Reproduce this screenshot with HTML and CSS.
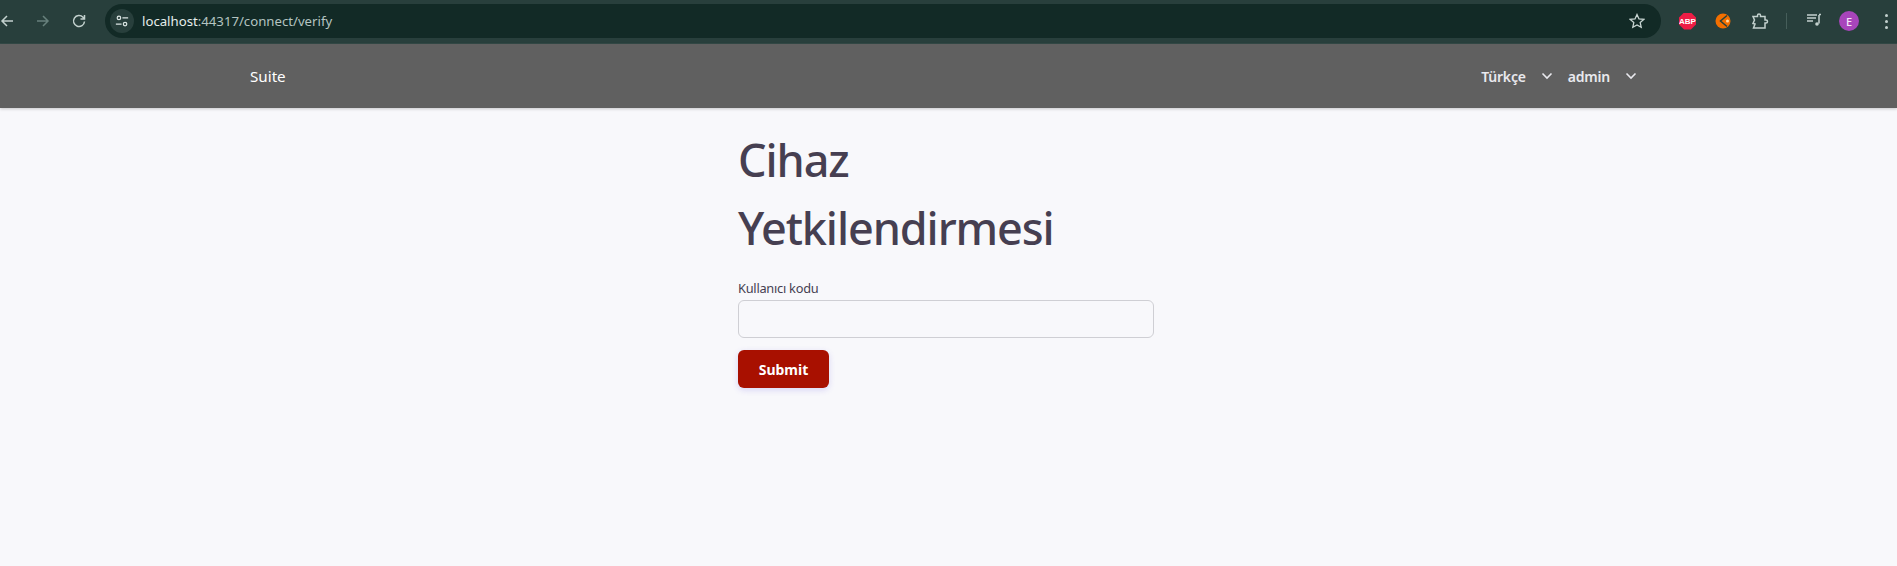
FILE: index.html
```html
<!DOCTYPE html>
<html lang="tr">
<head>
<meta charset="utf-8">
<title>Cihaz Yetkilendirmesi</title>
<link rel="stylesheet" href="styles.css">
</head>
<body>
<header class="chrome">
  <div class="nav-buttons">
    <svg class="ic back" viewBox="0 0 16 16"><path d="M14 8H3M8 3 3 8l5 5"/></svg>
    <svg class="ic fwd" viewBox="0 0 16 16"><path d="M2 8h11M8 3l5 5-5 5"/></svg>
    <svg class="ic reload" viewBox="0 0 16 16"><path d="M13.500 8.500A5.500 5.500 0 1 1 12 4.200L13.500 6M13.500 2v4h-4"/></svg>
  </div>
  <div class="omnibox">
    <span class="site-info">
      <svg class="tune" viewBox="0 0 16 16"><circle cx="4.500" cy="4.500" r="2"/><path d="M8.500 4.500H15M1 11.500h6.500"/><circle cx="11.500" cy="11.500" r="2"/></svg>
    </span>
    <span class="url">localhost<span class="url-dim">:44317/connect/verify</span></span>
    <svg class="star" viewBox="0 0 16 16"><path d="M8 1.500l2 4.400 4.800.5-3.600 3.200 1 4.700L8 11.900l-4.200 2.400 1-4.700L1.200 6.400 6 5.900z"/></svg>
  </div>
  <div class="extensions">
    <span class="abp">ABP</span>
    <svg class="ext-orange" viewBox="0 0 16 16"><circle cx="8" cy="8" r="7.500" fill="#f36f00"/><path d="M12 2.500 5.500 8l6.500 5.500" fill="none" stroke="#24403c" stroke-width="1.500"/><circle cx="12.500" cy="8" r="1.500" fill="#f9d9a8"/></svg>
    <svg class="ic puzzle" viewBox="0 0 18 18"><path d="M2 4.500h4.500V3.500a1.500 1.500 0 0 1 3 0v1H14v3.500h1a1.500 1.500 0 0 1 0 3h-1v5H2.500L4 12 2 11.500 3.500 8z"/></svg>
    <span class="sep"></span>
    <svg class="ic media" viewBox="0 1 16 16"><path d="M1 3h10M1 6h9M1 9h6M13 3v8.500"/><circle cx="11" cy="12" r="1.800" class="media-dot"/><path d="M13 2.500h2"/></svg>
    <span class="avatar">E</span>
    <span class="kebab"><i></i><i></i><i></i></span>
  </div>
</header>
<nav class="topnav">
  <a class="brand">Suite</a>
  <div class="menus">
    <a class="menu">Türkçe<svg class="chev" viewBox="0 0 12 8"><path d="M1.500 1.500 6 6l4.500-4.500"/></svg></a>
    <a class="menu menu-user">admin<svg class="chev" viewBox="0 0 12 8"><path d="M1.500 1.500 6 6l4.500-4.500"/></svg></a>
  </div>
</nav>
<main class="content">
  <h1 class="title">Cihaz Yetkilendirmesi</h1>
  <form class="form">
    <label class="label" for="code">Kullanıcı kodu</label>
    <input class="input" id="code" type="text">
    <button class="submit" type="button">Submit</button>
  </form>
</main>
</body>
</html>
```
FILE: styles.css
```css
* { box-sizing: border-box; }
html, body { margin: 0; height: 100%; }
body {
  background: #f8f8fb;
  font-family: "Noto Sans", "Open Sans", "Liberation Sans", sans-serif;
  color: #463f51;
  overflow: hidden;
}
.chrome {
  height: 44px;
  background: #283f3c;
  border-bottom: 1px solid #334a47;
  display: flex;
  align-items: center;
  padding-bottom: 1px;
}
.nav-buttons {
  width: 105px;
  display: flex;
  align-items: center;
  flex: none;
}
.ic { fill: none; stroke: #c3d1ce; stroke-width: 1.5; }
.back { width: 16px; height: 16px; margin-left: -1px; }
.fwd { width: 16px; height: 16px; margin-left: 20px; stroke: #67807c; }
.reload { width: 16px; height: 16px; margin-left: 20px; }
.omnibox {
  width: 1556px;
  height: 34px;
  flex: none;
  background: #122a26;
  border-radius: 17px;
  display: flex;
  align-items: center;
  padding-left: 5px;
  padding-right: 16px;
}
.site-info {
  width: 24px;
  height: 24px;
  border-radius: 50%;
  background: #283f3c;
  display: flex;
  align-items: center;
  justify-content: center;
  flex: none;
}
.tune { width: 14px; height: 14px; fill: none; stroke: #dbe5e3; stroke-width: 1.4; }
.url {
  margin-left: 8px;
  font: 13.200px "Noto Sans", "Open Sans", sans-serif;
  color: #e6eeec;
  flex: 1;
}
.url-dim { color: #b4c4c1; }
.star { width: 16px; height: 16px; fill: none; stroke: #c9d6d3; stroke-width: 1.3; }
.extensions {
  flex: 1;
  display: flex;
  align-items: center;
  padding-left: 18px;
}
.abp {
  width: 17px;
  height: 17px;
  clip-path: polygon(30% 0, 70% 0, 100% 30%, 100% 70%, 70% 100%, 30% 100%, 0 70%, 0 30%);
  background: #ee1d45;
  color: #fff;
  font: bold 8px "Liberation Sans", sans-serif;
  display: flex;
  align-items: center;
  justify-content: center;
  flex: none;
}
.ext-orange { width: 16px; height: 16px; margin-left: 19px; flex: none; }
.puzzle { width: 18px; height: 18px; margin-left: 20px; flex: none; }
.sep { width: 1px; height: 16px; background: #465e5a; margin-left: 17px; flex: none; }
.media { width: 16px; height: 16px; margin-left: 19px; flex: none; }
.media-dot { fill: #c3d1ce; stroke: none; }
.avatar {
  width: 20px;
  height: 20px;
  margin-left: 17px;
  border-radius: 50%;
  background: #a845bb;
  color: #f6e6f9;
  font: 500 11px "Noto Sans", sans-serif;
  display: flex;
  align-items: center;
  justify-content: center;
  flex: none;
}
.kebab { margin-left: 26px; display: flex; flex-direction: column; gap: 3px; flex: none; }
.kebab i { width: 3px; height: 3px; border-radius: 50%; background: #c3d1ce; display: block; }
.topnav {
  height: 64px;
  background: #606060;
  box-shadow: 0 1px 3px rgba(0,0,0,.2);
  display: flex;
  align-items: center;
  padding: 0 260px 0 250px;
  justify-content: space-between;
}
.brand { color: #fff; font-size: 15.200px; }
.menus { display: flex; align-items: center; }
.menu {
  display: flex;
  align-items: center;
  color: #e9e9ee;
  font-size: 14px;
  font-weight: 600;
  letter-spacing: -.2px;
}
.menu-user { margin-left: 15px; }
.chev { width: 12px; height: 8px; margin-left: 15px; fill: none; stroke: #e9e9ee; stroke-width: 1.6; }
.content {
  width: 416px;
  margin-left: 738px;
  padding-top: 18px;
}
.title {
  margin: 0;
  font-size: 45px;
  font-weight: 500;
  line-height: 68px;
  letter-spacing: -1.100px;
}
.form { display: flex; flex-direction: column; align-items: flex-start; margin-top: 17px; }
.label { font-size: 12.800px; line-height: 18px; letter-spacing: -.25px; }
.input {
  width: 416px;
  height: 38px;
  margin-top: 3px;
  background: #f8f8fb;
  border: 1px solid #cfcfd4;
  border-radius: 6px;
}
.submit {
  width: 91px;
  height: 38px;
  margin-top: 12px;
  border: 0;
  border-radius: 6px;
  background: #a81000;
  color: #fff;
  font: 700 14px "Noto Sans", sans-serif;
  box-shadow: 0 2px 6px rgba(90,70,220,.2);
}
```
